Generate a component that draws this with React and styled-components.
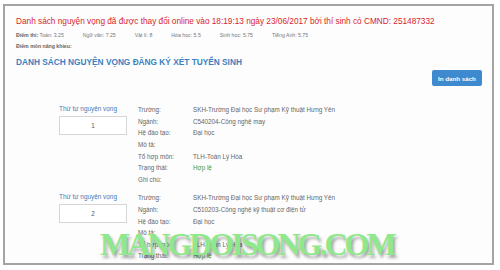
import React from "react";
import styled, { createGlobalStyle } from "styled-components";

const GlobalStyle = createGlobalStyle`
  html, body {
    margin: 0;
    padding: 0;
    background: #ffffff;
  }
  body {
    width: 500px;
    height: 270px;
    overflow: hidden;
    font-family: "Liberation Sans", Arial, sans-serif;
  }
`;

const scores = [
  { label: "Toán", value: "3.25" },
  { label: "Ngữ văn", value: "7.25" },
  { label: "Vật lí", value: "8" },
  { label: "Hóa học", value: "5.5" },
  { label: "Sinh học", value: "5.75" },
  { label: "Tiếng Anh", value: "5.75" },
];

const wishes = [
  {
    order: 1,
    fields: [
      ["Trường:", "SKH-Trường Đại học Sư phạm Kỹ thuật Hưng Yên"],
      ["Ngành:", "C540204-Công nghệ may"],
      ["Hệ đào tạo:", "Đại học"],
      ["Mô tả:", ""],
      ["Tổ hợp môn:", "TLH-Toán Lý Hóa"],
      ["Trạng thái:", "Hợp lệ", true],
      ["Ghi chú:", ""],
    ],
  },
  {
    order: 2,
    fields: [
      ["Trường:", "SKH-Trường Đại học Sư phạm Kỹ thuật Hưng Yên"],
      ["Ngành:", "C510203-Công nghệ kỹ thuật cơ điện tử"],
      ["Hệ đào tạo:", "Đại học"],
      ["Mô tả:", ""],
      ["Tổ hợp môn:", "TLH-Toán Lý Hóa"],
      ["Trạng thái:", "Hợp lệ", true],
      ["Ghi chú:", ""],
    ],
  },
];

const App = () => {
  return (
    <>
      <GlobalStyle />
      <Frame>
        <Notice>
          Danh sách nguyện vọng đã được thay đổi online vào 18:19:13 ngày
          23/06/2017 bởi thí sinh có CMND: 251487332
        </Notice>
        <ScoreLine>
          <span>
            <b>Điểm thi:</b> {scores[0].label}: {scores[0].value}
          </span>
          {scores.slice(1).map((s) => (
            <span key={s.label}>
              {s.label}: {s.value}
            </span>
          ))}
        </ScoreLine>
        <AptitudeLine>
          <b>Điểm môn năng khiếu:</b>
        </AptitudeLine>
        <Heading>DANH SÁCH NGUYỆN VỌNG ĐĂNG KÝ XÉT TUYỂN SINH</Heading>
        <Toolbar>
          <PrintButton>In danh sách</PrintButton>
        </Toolbar>
        <WishList>
          {wishes.map((w) => (
            <WishItem key={w.order}>
              <OrderColumn>
                <OrderLabel>Thứ tự nguyện vọng</OrderLabel>
                <OrderBox>{w.order}</OrderBox>
              </OrderColumn>
              <Fields>
                {w.fields.map(([label, value, ok]) => (
                  <React.Fragment key={label}>
                    <FieldLabel>{label}</FieldLabel>
                    <FieldValue $ok={ok}>{value}</FieldValue>
                  </React.Fragment>
                ))}
              </Fields>
            </WishItem>
          ))}
        </WishList>
        <Watermark>MANGDOISONG.COM</Watermark>
      </Frame>
    </>
  );
};

export default App;

// Styled components
const Frame = styled.div`
  position: relative;
  box-sizing: border-box;
  margin: 4px 0 0 3px;
  width: 491px;
  height: 261px;
  border: 2px solid #a4a4a4;
  background: #fdfdfd;
  padding: 10px 10px 0 11px;
  overflow: hidden;
`;

const Notice = styled.div`
  font-size: 8.25px;
  line-height: 12px;
  color: #d8242c;
  white-space: nowrap;
`;

const ScoreLine = styled.div`
  display: flex;
  gap: 19px;
  margin-top: 2px;
  font-size: 5.2px;
  line-height: 11px;
  color: #777;
  white-space: nowrap;

  b {
    color: #666;
  }
`;

const AptitudeLine = styled.div`
  font-size: 5.2px;
  line-height: 11px;
  color: #666;
`;

const Heading = styled.h3`
  margin: 4px 0 0;
  font-size: 8.3px;
  line-height: 12px;
  font-weight: bold;
  color: #3a80c0;
  white-space: nowrap;
`;

const Toolbar = styled.div`
  display: flex;
  justify-content: flex-end;
  margin-top: 2px;
`;

const PrintButton = styled.button`
  width: 50px;
  height: 16px;
  padding: 0;
  border: none;
  border-radius: 2px;
  background: #3f89cf;
  color: #ffffff;
  font-family: "Liberation Sans", Arial, sans-serif;
  font-size: 6.2px;
  font-weight: bold;
`;

const WishList = styled.div`
  display: flex;
  flex-direction: column;
  gap: 7px;
  margin-top: 18px;
`;

const WishItem = styled.div`
  display: flex;
  padding-left: 43px;
`;

const OrderColumn = styled.div`
  display: flex;
  flex-direction: column;
  width: 68px;
  margin-right: 11px;
`;

const OrderLabel = styled.div`
  font-size: 6.4px;
  line-height: 10px;
  color: #3a80c0;
  white-space: nowrap;
`;

const OrderBox = styled.div`
  box-sizing: border-box;
  height: 19px;
  margin-top: 2px;
  border: 1px solid #d6d6d6;
  background: #ffffff;
  display: flex;
  align-items: center;
  justify-content: center;
  font-size: 6.4px;
  color: #555;
`;

const Fields = styled.div`
  display: grid;
  grid-template-columns: 55px auto;
  grid-auto-rows: 11.6px;
  align-items: center;
  font-size: 6.3px;
  color: #666;
  white-space: nowrap;
`;

const FieldLabel = styled.div`
  color: #666;
`;

const FieldValue = styled.div`
  color: ${(props) => (props.$ok ? "#3e9a3e" : "#666")};
`;

const Watermark = styled.div`
  position: absolute;
  left: 95px;
  top: 222px;
  font-family: "Liberation Serif", "Times New Roman", serif;
  font-size: 32px;
  line-height: 32px;
  font-weight: bold;
  letter-spacing: -3px;
  color: #8fe88b;
  text-shadow: 2px 3px 3px rgba(0, 0, 0, 0.35);
  white-space: nowrap;
  pointer-events: none;
`;
